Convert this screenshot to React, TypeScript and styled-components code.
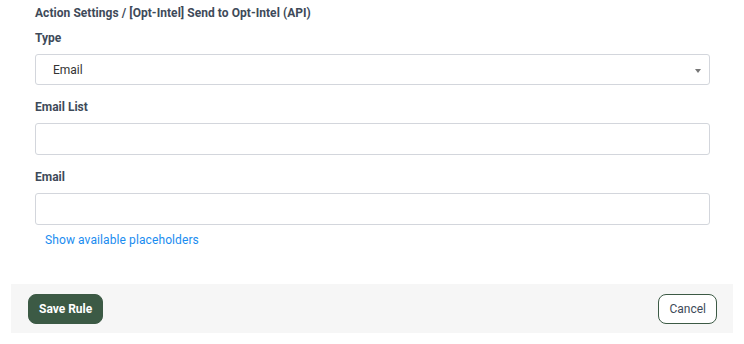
import styled, { createGlobalStyle } from "styled-components";

const GlobalStyle = createGlobalStyle`
  body {
    margin: 0;
    background: #ffffff;
    font-family: Roboto, "Liberation Sans", sans-serif;
  }
`;

const Page = styled.div`
  width: 744px;
  height: 344px;
  padding: 0 11px;
  box-sizing: border-box;
`;

const Form = styled.div`
  padding: 5px 23px 0 24px;
  height: 284px;
  box-sizing: border-box;
`;

const Title = styled.h1`
  margin: 0;
  font-size: 12px;
  font-weight: 700;
  color: #3e4a59;
  line-height: 16px;
  letter-spacing: 0.05px;
`;

const Field = styled.div`
  margin-top: 14px;

  &:first-of-type {
    margin-top: 9px;
  }
`;

const Label = styled.div`
  font-size: 12px;
  font-weight: 700;
  color: #3e4a59;
  line-height: 16px;
  margin-bottom: 8px;
`;

const SelectBox = styled.div`
  position: relative;
  height: 31px;
  border: 1px solid #d3d6dc;
  border-radius: 3px;
  box-sizing: border-box;
  display: flex;
  align-items: center;
  padding-left: 17px;
  font-size: 12px;
  color: #333;
`;

const Caret = styled.span`
  position: absolute;
  right: 8px;
  top: 50%;
  margin-top: -1px;
  width: 0;
  height: 0;
  border-left: 3px solid transparent;
  border-right: 3px solid transparent;
  border-top: 4px solid #777;
`;

const Input = styled.input`
  display: block;
  width: 100%;
  height: 32px;
  border: 1px solid #d3d6dc;
  border-radius: 3px;
  box-sizing: border-box;
  font-family: inherit;
  font-size: 12px;
  outline: none;
`;

const PlaceholderLink = styled.a`
  display: inline-block;
  margin: 8px 0 0 10px;
  font-size: 12px;
  color: #1a8cf0;
  text-decoration: none;
  cursor: pointer;
  letter-spacing: 0.1px;
`;

const Footer = styled.div`
  height: 49px;
  background: #f6f6f6;
  display: flex;
  align-items: center;
  justify-content: space-between;
  padding: 0 16px 0 17px;
`;

const Button = styled.button<{ $primary?: boolean }>`
  height: 30px;
  border-radius: 8px;
  font-family: inherit;
  font-size: 12px;
  padding: 0 10px;
  cursor: pointer;
  border: 1px solid #3c5a45;
  background: ${(p) => (p.$primary ? "#3c5a45" : "#ffffff")};
  color: ${(p) => (p.$primary ? "#ffffff" : "#3e4a59")};
  font-weight: ${(p) => (p.$primary ? 700 : 400)};
`;

const App = (): JSX.Element => (
  <>
    <GlobalStyle />
    <Page>
      <Form>
        <Title>Action Settings / [Opt-Intel] Send to Opt-Intel (API)</Title>
        <Field>
          <Label>Type</Label>
          <SelectBox>
            Email
            <Caret />
          </SelectBox>
        </Field>
        <Field>
          <Label>Email List</Label>
          <Input />
        </Field>
        <Field>
          <Label>Email</Label>
          <Input />
        </Field>
        <PlaceholderLink>Show available placeholders</PlaceholderLink>
      </Form>
      <Footer>
        <Button $primary>Save Rule</Button>
        <Button>Cancel</Button>
      </Footer>
    </Page>
  </>
);

export default App;
